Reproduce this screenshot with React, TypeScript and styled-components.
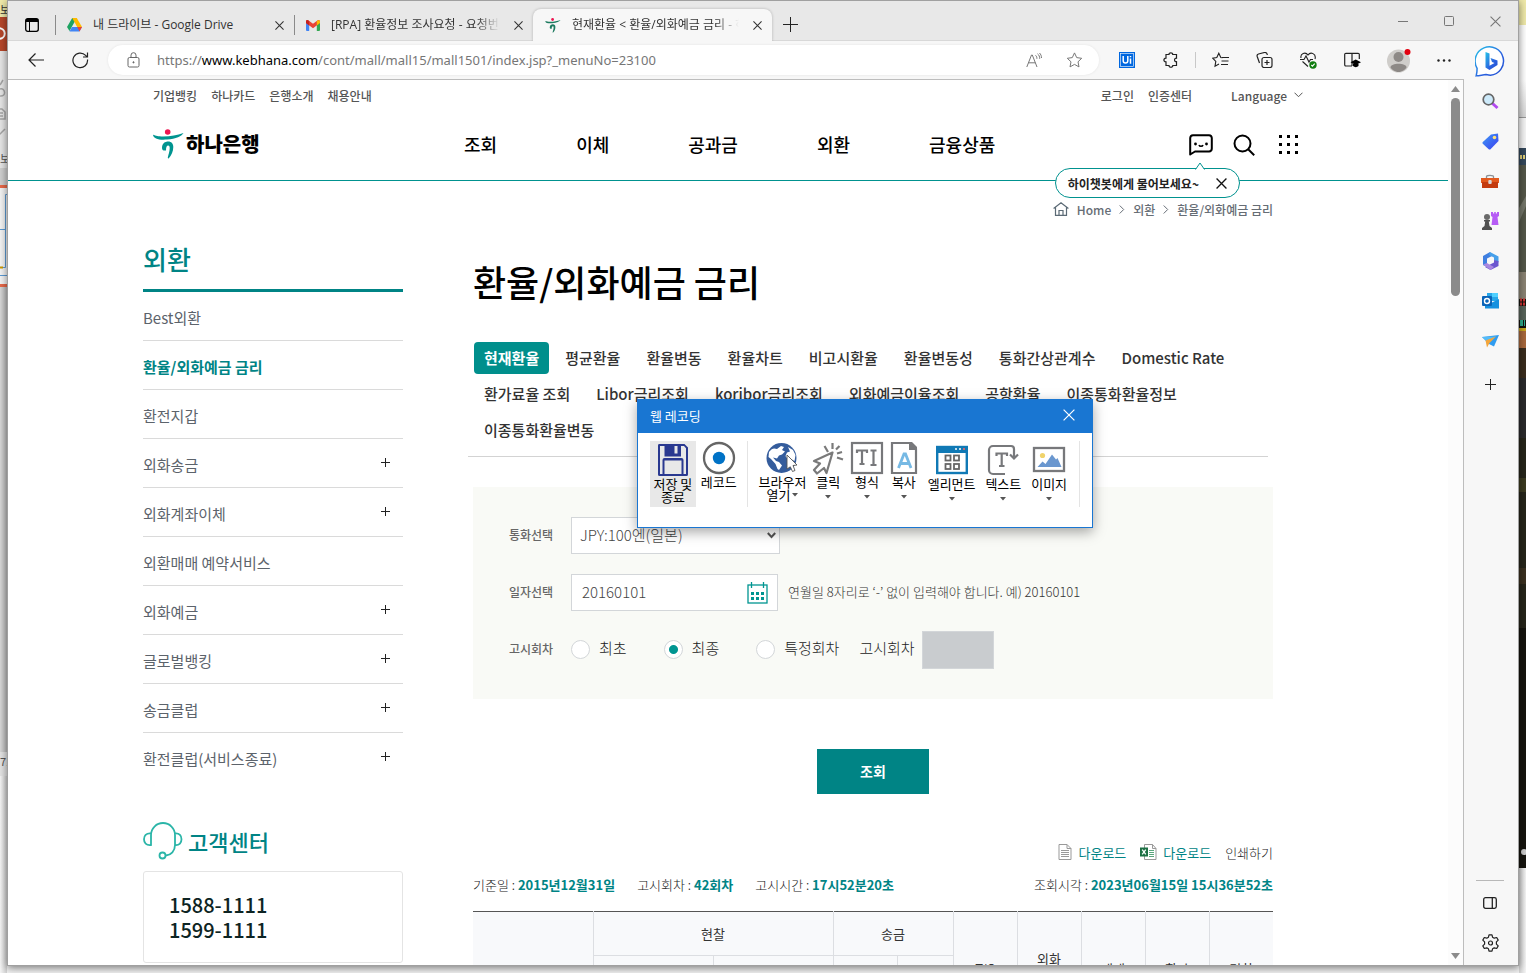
import React from "react";
import styled, { createGlobalStyle, css } from "styled-components";

const KR = `"Noto Sans CJK KR", sans-serif`;
const UI = `"Open Sans", "Noto Sans CJK KR", sans-serif`;
const TEAL = "#008485";

const GlobalStyle = createGlobalStyle`
  * { box-sizing: border-box; }
  body { margin: 0; background: #fff; font-family: ${KR}; font-size: 13px; color: #222; }
  button, input, select { font: inherit; color: inherit; margin: 0; }
  button { border: 0; background: none; padding: 0; cursor: pointer; }
  a { color: inherit; text-decoration: none; }
  ul { list-style: none; margin: 0; padding: 0; }
  h1, h2, p { margin: 0; }
  svg { display: block; flex: none; }
`;

/* ---------- desktop and browser frame ---------- */

const Desktop = styled.div`
  position: relative;
  display: grid;
  grid-template-columns: 7px minmax(0, 1fr) 7px;
  grid-template-rows: minmax(0, 1fr) 7px;
  height: 100vh;
  overflow: hidden;
  background: #f4f4f4;
`;

const EdgeStrip = styled.div<{ $col: number }>`
  grid-row: 1 / 3;
  grid-column: ${(p) => p.$col};
  display: flex;
  flex-direction: column;
  overflow: hidden;
`;

const EdgeBlock = styled.div<{ $h?: number; $bg: string; $color?: string }>`
  flex: ${(p) => (p.$h ? `none` : `1 0 0`)};
  height: ${(p) => (p.$h ? `${p.$h}px` : "auto")};
  background: ${(p) => p.$bg};
  color: ${(p) => p.$color ?? "#555"};
  overflow: hidden;
  font-size: 11px;
  line-height: 18px;
  white-space: nowrap;
`;

const BrowserWindow = styled.div`
  grid-row: 1;
  grid-column: 2;
  display: flex;
  flex-direction: column;
  min-width: 0;
  min-height: 0;
  border: 1px solid #a0a0a0;
  background: #f7f7f7;
  box-shadow: 0 2px 8px rgba(0, 0, 0, 0.5);
  z-index: 1;
`;

const TabStrip = styled.div`
  display: flex;
  flex: none;
  height: 40px;
  background: #e8e8e8;
  border-bottom: 1px solid #d8d8d8;
  font-family: ${UI};
  font-size: 12px;
  color: #333;
`;

const TabMenuButton = styled.button`
  width: 47px;
  display: grid;
  place-items: center;
  padding-top: 8px;
`;

const BrowserTab = styled.div<{ $active?: boolean }>`
  display: flex;
  align-items: center;
  width: 239px;
  margin-top: 8px;
  height: 32px;
  padding: 0 8px 0 12px;
  gap: 11px;
  position: relative;
  ${(p) =>
    p.$active
      ? css`
          background: #f7f7f7;
          border-radius: 8px 8px 0 0;
          box-shadow: 0 0 3px rgba(0, 0, 0, 0.25);
          clip-path: inset(-4px -4px 0 -4px);
        `
      : css`
          &::before {
            content: "";
            position: absolute;
            left: 0;
            top: 6px;
            height: 20px;
            width: 1px;
            background: #8a8a8a;
          }
        `}
`;

const TabTitle = styled.span<{ $fade?: boolean }>`
  flex: 1;
  min-width: 0;
  overflow: hidden;
  white-space: nowrap;
  line-height: 20px;
  ${(p) => p.$fade && css`mask-image: linear-gradient(90deg, #000 86%, transparent);`}
`;

const SmallButton = styled.button<{ $w?: number }>`
  width: ${(p) => p.$w ?? 14}px;
  display: grid;
  place-items: center;
  flex: none;
`;

const NewTabButton = styled(SmallButton)`
  padding-top: 8px;
`;

const WindowButtons = styled.div`
  display: flex;
  margin-left: auto;
  padding-top: 2px;
`;

const BrowserBody = styled.div`
  flex: 1;
  display: flex;
  min-height: 0;
`;

const BrowserMain = styled.div`
  flex: 1;
  min-width: 0;
  display: flex;
  flex-direction: column;
`;

const Toolbar = styled.div`
  display: flex;
  align-items: center;
  flex: none;
  height: 38px;
  padding-left: 6px;
`;

const ToolButton = styled.button<{ $w?: number }>`
  width: ${(p) => p.$w ?? 44}px;
  height: 36px;
  display: grid;
  place-items: center;
  flex: none;
`;

const ToolDivider = styled.span`
  width: 1px;
  height: 16px;
  margin: 0 2px;
  background: #c8c8c8;
`;

const AddressBar = styled.form`
  flex: 1;
  min-width: 0;
  display: flex;
  align-items: center;
  height: 30px;
  margin: 0 6px;
  padding-left: 19px;
  padding-right: 5px;
  border-radius: 15px;
  background: #fff;
  box-shadow: 0 0 3px rgba(0, 0, 0, 0.08);
`;

const Url = styled.a`
  flex: 1;
  min-width: 0;
  margin-left: 17px;
  overflow: hidden;
  white-space: nowrap;
  font-family: "Noto Sans", sans-serif;
  font-size: 13px;
  color: #767676;
  b { font-weight: 400; color: #000; }
`;

const EdgeSidebar = styled.aside`
  width: 54px;
  flex: none;
  display: flex;
  flex-direction: column;
  align-items: center;
  padding: 0 2px 2px 0;
`;

const SideButton = styled.button<{ $gap?: boolean }>`
  width: 40px;
  height: 40px;
  flex: none;
  display: grid;
  place-items: center;
  margin-top: ${(p) => (p.$gap ? 3 : 0)}px;
`;

const SideRule = styled.span`
  width: 28px;
  height: 1px;
  margin-top: auto;
  margin-bottom: 2px;
  background: #b8b8b8;
`;

const Viewport = styled.div`
  flex: 1;
  display: flex;
  min-height: 0;
  overflow: hidden;
  background: #fff;
  border-top: 1px solid #bdbdbd;
  border-right: 1px solid #bdbdbd;
`;

const Page = styled.div`
  flex: 1;
  min-width: 0;
  overflow: hidden;
`;

const ScrollTrack = styled.div`
  width: 15px;
  flex: none;
  display: flex;
  flex-direction: column;
  align-items: center;
  justify-content: space-between;
  padding: 6px 0;
  background: #fcfcfc;
`;

const ScrollThumb = styled.div`
  width: 9px;
  height: 198px;
  margin-top: 6px;
  margin-bottom: auto;
  border-radius: 5px;
  background: #8b8b8b;
`;

/* ---------- bank site ---------- */

const SiteHeader = styled.header`
  height: 101px;
  border-bottom: 1px solid #00928f;
`;

const HeaderInner = styled.div`
  max-width: 1150px;
  margin: 0 auto;
`;

const UtilityRow = styled.div`
  display: flex;
  align-items: center;
  height: 30px;
  gap: 14px;
  font-size: 12px;
  font-weight: 500;
  color: #555;
`;

const LoginLink = styled.a`
  margin-left: auto;
`;

const LanguageButton = styled.button`
  display: flex;
  align-items: center;
  gap: 7px;
  margin-left: 25px;
`;

const NavRow = styled.div`
  display: flex;
  align-items: center;
  height: 68px;
`;

const Logo = styled.a`
  display: flex;
  align-items: center;
  gap: 2px;
  width: 311px;
  font-size: 20px;
  font-weight: 900;
  line-height: 30px;
  color: #000;
`;

const MainNav = styled.nav`
  display: flex;
  gap: 79px;
  font-size: 18px;
  font-weight: 500;
  color: #000;
`;

const HeaderTools = styled.div`
  display: flex;
  align-items: center;
  gap: 20px;
  margin-left: auto;
  padding-top: 2px;
  position: relative;
`;

const ChatBubble = styled.div`
  position: absolute;
  top: 36px;
  right: 63px;
  z-index: 2;
  display: flex;
  align-items: center;
  gap: 17px;
  height: 30px;
  padding: 0 12px;
  border: 1px solid #00928f;
  border-radius: 15px;
  background: #fff;
  font-size: 12px;
  font-weight: 700;
  white-space: nowrap;
  color: #222;
`;

const BubbleTail = styled.svg`
  position: absolute;
  top: -7px;
  right: 34px;
`;

const MainArea = styled.main`
  display: flex;
  max-width: 1170px;
  margin: 0 auto;
`;

const SideNav = styled.aside`
  width: 260px;
  flex: none;
  margin-right: 70px;
  padding-top: 53px;
`;

const SideTitle = styled.h2`
  padding-bottom: 5px;
  border-bottom: 3px solid ${TEAL};
  font-size: 26px;
  line-height: 50px;
  font-weight: 500;
  color: ${TEAL};
`;

const SideItem = styled.li<{ $current?: boolean }>`
  display: flex;
  align-items: center;
  justify-content: space-between;
  height: 49px;
  padding-right: 13px;
  padding-top: 2px;
  border-bottom: 1px solid #dadada;
  font-size: 15px;
  color: #5c636b;
  &:last-child { border-bottom-color: transparent; }
  svg { margin-bottom: 4px; }
  ${(p) => p.$current && css`color: ${TEAL}; font-weight: 700;`}
`;

const SupportTitle = styled.h2`
  display: flex;
  align-items: center;
  gap: 5px;
  height: 38px;
  margin-top: 40px;
  font-size: 22px;
  font-weight: 500;
  color: ${TEAL};
`;

const SupportBox = styled.div`
  height: 92px;
  margin-top: 11px;
  padding: 20px 25px;
  border: 1px solid #e4e4e4;
  border-radius: 3px;
  font-size: 20px;
  line-height: 25px;
  font-weight: 500;
  color: #0d2423;
`;

const Content = styled.section`
  flex: 1;
  min-width: 0;
  max-width: 800px;
  padding-top: 18px;
`;

const Breadcrumb = styled.nav`
  display: flex;
  align-items: center;
  justify-content: flex-end;
  gap: 8px;
  height: 20px;
  font-size: 12px;
  font-weight: 500;
  color: #666d75;
`;

const PageTitle = styled.h1`
  margin-top: 37px;
  font-size: 36px;
  line-height: 50px;
  font-weight: 500;
  color: #000;
`;

const RateTabs = styled.ul`
  display: flex;
  flex-wrap: wrap;
  gap: 4px 6px;
  margin: 36px 5px 0 -5px;
  padding: 0 0 10px 6px;
  border-bottom: 1px solid #d3d3d3;
`;

const RateTab = styled.a<{ $active?: boolean }>`
  display: block;
  padding: 0 10px;
  border-radius: 4px;
  font-size: 15px;
  line-height: 32px;
  font-weight: 500;
  color: #333;
  ${(p) => p.$active && css`background: #008f8c; color: #fff; font-weight: 700;`}
`;

const SearchForm = styled.form`
  display: flex;
  flex-direction: column;
  gap: 20px;
  margin-top: 30px;
  padding: 30px 36px 31px;
  background: #f9faf6;
`;

const FormRow = styled.div`
  display: flex;
  align-items: center;
  height: 37px;
`;

const RowLabel = styled.label`
  width: 62px;
  flex: none;
  padding-bottom: 2px;
  font-size: 12px;
  font-weight: 500;
  color: #666;
`;

const CurrencySelect = styled.div`
  position: relative;
  width: 209px;
  height: 37px;
  select {
    appearance: none;
    width: 100%;
    height: 100%;
    padding: 0 8px 2px;
    border: 1px solid #d3d6d9;
    border-radius: 0;
    background: #fff;
    font-size: 15px;
    font-weight: 300;
    color: #444;
  }
  svg { position: absolute; right: 4px; top: 15px; pointer-events: none; }
`;

const DateField = styled.div`
  display: flex;
  align-items: center;
  width: 207px;
  height: 37px;
  padding: 0 9px 0 10px;
  border: 1px solid #d3d6d9;
  background: #fff;
  input {
    flex: 1;
    min-width: 0;
    border: 0;
    padding: 0 0 2px;
    outline: 0;
    font-size: 15px;
    font-weight: 300;
    color: #444;
  }
`;

const HelpText = styled.span`
  margin-left: 10px;
  padding-bottom: 2px;
  font-weight: 300;
  color: #333;
`;

const RadioLabel = styled.label`
  display: flex;
  align-items: center;
  gap: 9px;
  margin-right: 37px;
  font-size: 15px;
  font-weight: 300;
  color: #222;
  input {
    appearance: none;
    width: 19px;
    height: 19px;
    border: 1px solid #d3d6d9;
    border-radius: 50%;
    background: #fff;
  }
  input:checked { background: radial-gradient(circle, #009591 4px, #fff 5px); }
  span { padding-bottom: 4px; }
  &:last-of-type { margin-right: 20px; }
`;

const RoundLabel = styled.span`
  display: flex;
  align-items: center;
  gap: 7px;
  font-size: 15px;
  font-weight: 300;
  color: #222;
  label { padding-bottom: 4px; }
  input {
    width: 72px;
    height: 38px;
    border: 1px solid #d3d6d9;
    background: #c9cccf;
  }
`;

const SubmitButton = styled.button`
  display: block;
  width: 112px;
  height: 45px;
  margin: 50px auto 0;
  padding-bottom: 2px;
  background: ${TEAL};
  color: #fff;
  font-size: 14px;
  font-weight: 700;
`;

const DownloadRow = styled.div`
  display: flex;
  justify-content: flex-end;
  align-items: center;
  gap: 14px;
  height: 20px;
  margin-top: 48px;
  font-weight: 300;
  color: #222;
`;

const DownloadLink = styled.a`
  display: flex;
  align-items: center;
  gap: 6px;
  font-weight: 400;
  color: ${TEAL};
`;

const InfoRow = styled.div`
  display: flex;
  gap: 22px;
  height: 20px;
  line-height: 20px;
  margin-top: 13px;
  font-weight: 300;
  color: #222;
  white-space: nowrap;
  b { color: ${TEAL}; font-weight: 700; }
  span:last-child { margin-left: auto; }
`;

const RateTable = styled.table`
  width: 100%;
  margin-top: 16px;
  border-collapse: collapse;
  table-layout: fixed;
  border-top: 1px solid #555;
  th {
    padding: 0;
    border-left: 1px solid #dcdee2;
    border-bottom: 1px solid #dcdee2;
    background: #f8f9fb;
    font-weight: 400;
    line-height: 20px;
    color: #333;
  }
  th:first-child { border-left: 0; }
  tr + tr th:first-child { border-left: 1px solid #dcdee2; }
  tr:first-child { height: 44px; }
  tr:nth-child(2) { height: 90px; }
`;

/* ---------- recorder dialog ---------- */

const RecorderDialog = styled.div`
  position: absolute;
  left: 637px;
  top: 399px;
  width: 456px;
  height: 129px;
  z-index: 5;
  border: 1px solid #1976d2;
  background: #fff;
  box-shadow: 0 4px 12px rgba(0, 0, 0, 0.35);
  color: #000;
`;

const DialogTitle = styled.div`
  display: flex;
  align-items: center;
  justify-content: space-between;
  height: 33px;
  padding: 0 17px 3px 12px;
  background: #1976d2;
  color: #fff;
`;

const DialogTools = styled.div`
  display: flex;
  align-items: flex-start;
  padding: 8px 12px;
`;

const DialogButton = styled.button<{ $w: number; $active?: boolean; $low?: boolean }>`
  width: ${(p) => p.$w}px;
  height: 66px;
  padding-top: ${(p) => (p.$low ? 2 : 0)}px;
  display: flex;
  flex-direction: column;
  align-items: center;
  background: ${(p) => (p.$active ? "#e8e8e8" : "transparent")};
  line-height: 13px;
  white-space: nowrap;
`;

const DialogRule = styled.span<{ $l: number; $r: number }>`
  width: 1px;
  height: 66px;
  margin-left: ${(p) => p.$l}px;
  margin-right: ${(p) => p.$r}px;
  background: #e4e4e4;
`;

const LabelLine = styled.span`
  display: flex;
  align-items: center;
  gap: 2px;
`;

const CaretSlot = styled.span`
  padding-top: 7px;
`;

/* ---------- drawings ---------- */

const Cross = ({ s = 9, c = "#333", w = 1.2 }: { s?: number; c?: string; w?: number }) => (
  <svg width={s} height={s} viewBox="0 0 10 10" stroke={c} strokeWidth={w} fill="none">
    <path d="M.5.5l9 9M9.5.5l-9 9" />
  </svg>
);

const Plus = ({ s = 9, c = "#222" }: { s?: number; c?: string }) => (
  <svg width={s} height={s} viewBox={`0 0 ${s} ${s}`} stroke={c} fill="none">
    <path d={`M${s / 2} 0v${s}M0 ${s / 2}h${s}`} />
  </svg>
);

const Caret = () => (
  <svg width="6" height="4" viewBox="0 0 6 4"><path d="M0 0h6L3 3.5z" fill="#555" /></svg>
);

const HanaMark = ({ w = 31, h = 30, dark }: { w?: number; h?: number; dark?: boolean }) => {
  const c = dark ? "#1d7a5f" : "#009490";
  return (
    <svg width={w} height={h} viewBox="0 0 31 30">
      <circle cx="14.700" cy="3" r="2.800" fill="#ed1651" />
      <path d="M0 5.800c3 .9 5 1.700 10 1.700 8 0 14-1.200 20.500-3.500C29 7 23 10 14 10.600 6 11.200.5 10 0 5.800z" fill={c} />
      <path d="M9 19c0-4.500 3-6.500 6.300-6.500 3 0 5 2.200 5 5.500 0 4.500-2 8.500-4.500 11.200-.5.500-1.200.2-1-.6.600-3 1.900-6 1.900-9.500 0-1.500-.5-2.500-1.500-2.500-1.500 0-2.200 1.500-2.200 4.800C10.500 22 9 21 9 19z" fill={c} />
    </svg>
  );
};

const TabsIcon = () => (
  <svg width="14" height="14" viewBox="0 0 14 14" fill="none" stroke="#000">
    <rect x=".7" y=".7" width="12.600" height="12.600" rx="2" strokeWidth="1.300" />
    <path d="M1 2.500h12" strokeWidth="3" /><path d="M4.500 3v10" />
  </svg>
);

const DriveIcon = () => (
  <svg width="15" height="14" viewBox="0 0 15 14">
    <path d="M5.200 0h4.600L5 8.500 2.500 13 0 9z" fill="#1ea362" />
    <path d="M5.200 0h4.600L15 9h-4.800z" fill="#ffba00" />
    <path d="M2.500 13.500L5 9h10l-2.500 4.500z" fill="#4285f4" />
    <path d="M10.200 9H15l-2.500 4.500z" fill="#ea4335" />
  </svg>
);

const GmailIcon = () => (
  <svg width="14" height="11" viewBox="0 0 14 11">
    <path d="M0 1.500V10a1 1 0 001 1h2.200V4.500z" fill="#4285f4" />
    <path d="M14 1.500V10a1 1 0 01-1 1h-2.200V4.500z" fill="#34a853" />
    <path d="M0 1.500C0 0 1.500-.4 2.600.5L7 3.800 11.400.5C12.500-.4 14 0 14 1.500V3L7 8.200 0 3z" fill="#ea4335" />
    <path d="M10.800.9C12-.3 14 0 14 1.500V3l-3.200 2.400z" fill="#fbbc04" />
    <path d="M0 1.500C0 .6.500 0 1.300 0L3.200 1v4.400L0 3z" fill="#c5221f" />
  </svg>
);

const BackIcon = () => (
  <svg width="16" height="14" viewBox="0 0 16 14" fill="none" stroke="#222" strokeWidth="1.200"><path d="M7.500.5L1 7l6.500 6.500M1 7h15" /></svg>
);

const ReloadIcon = () => (
  <svg width="17" height="17" viewBox="0 0 17 17" fill="none" stroke="#222" strokeWidth="1.200"><path d="M15.500 7.500A7.300 7.300 0 1113.600 3.400L15.500 5M15.500.5V5H11" /></svg>
);

const LockIcon = () => (
  <svg width="13" height="16" viewBox="0 0 13 16" fill="none" stroke="#666"><rect x="1" y="5.500" width="11" height="9.500" rx="1.500" /><path d="M4 5.500V3.200a2.500 2.500 0 015 0v2.300" /><circle cx="6.500" cy="10.300" r=".6" fill="#666" /></svg>
);

const ReadAloudIcon = () => (
  <svg width="16" height="15" viewBox="0 0 16 15" fill="none" stroke="#777"><path d="M.8 14L5.500 2h.8L11 14M2.400 9.800h7M9.500 2.300c1 .8 1.500 2 1.400 3.500M11.500.8c1.500 1.200 2.300 2.800 2.200 5M13.500 0c1.400 1.400 2 3 2 5" /></svg>
);

const STAR = "M8 .9l2.200 4.700 5 .7-3.700 3.500 1 5.100L8 12.400l-4.500 2.500 1-5.100L.8 6.300l5-.7z";

const StarIcon = () => (
  <svg width="17" height="16" viewBox="0 0 16 16" fill="none" stroke="#777"><path d={STAR} /></svg>
);

const UiIcon = () => (
  <svg width="16" height="16" viewBox="0 0 16 16">
    <rect width="16" height="16" fill="#0067df" /><rect x="1.500" y="1.500" width="13" height="13" fill="none" stroke="#fff" strokeWidth=".6" />
    <path d="M4.200 4v4.700a2.300 2.300 0 004.600 0V4M11.500 6.500v5.300M11.500 4v1.300" stroke="#fff" strokeWidth="1.500" fill="none" />
  </svg>
);

const PuzzleIcon = () => (
  <svg width="16" height="16" viewBox="0 0 16 16" fill="none" stroke="#222" strokeWidth="1.200"><path d="M3 2.500h3c-.3-2.300 4-2.300 3.700 0h3.800v3.700c-2.600-.4-2.600 3.900 0 3.500v3.800H9.800c.2 2.300-4 2.300-3.800 0H3V9.800C.2 10 .2 6 3 6.200z" /></svg>
);

const FavoritesIcon = () => (
  <svg width="17" height="16" viewBox="0 0 17 16" fill="none" stroke="#222" strokeWidth="1.100"><path d="M10.500 5.700L8.800 5.500 6.800 1.200 4.800 5.500.7 6.200l3.100 3.200-.8 4.900 4-2.200M10 5.500h7M9.500 9h7M9 12.500h7" /></svg>
);

const CollectionsIcon = () => (
  <svg width="17" height="16" viewBox="0 0 17 16" fill="none" stroke="#222" strokeWidth="1.200"><rect x="6" y="5.500" width="10" height="10" rx="2" /><path d="M11 8v5M8.500 10.500h5M3.500 11L1.200 4.500A2 2 0 012.500 2l6-1.500c1.500-.3 2.500.6 2.900 2.500" /></svg>
);

const HeartIcon = () => (
  <svg width="17" height="17" viewBox="0 0 17 17" fill="none" stroke="#222" strokeWidth="1.100">
    <path d="M1 6C0 1.500 5.500-.5 8 3c2.500-3.500 8.500-1.500 7 4M2.500 9.500L8 14.500M0 7.500h4L6 4l3 6 1.500-2.500H13" />
    <circle cx="13" cy="13" r="3.700" fill="#107c10" stroke="none" /><path d="M11.300 13l1.200 1.200 2.200-2.500" stroke="#fff" />
  </svg>
);

const ReaderIcon = () => (
  <svg width="17" height="16" viewBox="0 0 17 16" fill="none" stroke="#222" strokeWidth="1.200"><path d="M8 14H2A1.200 1.200 0 01.7 12.800V2.500A1.200 1.200 0 012 1.300h12a1.200 1.200 0 011.300 1.200V7M8 1.300V14" /><path d="M6.500 10.300l5.200-2.800 5.300 2.800-5.300 2.800z" fill="#000" stroke="none" /><path d="M9 12v2c1.500 1.500 4 1.500 5.500 0v-2" fill="#000" stroke="none" /></svg>
);

const AvatarIcon = () => (
  <svg width="27" height="25" viewBox="0 0 27 25">
    <circle cx="12.500" cy="13" r="11.500" fill="#cfcdca" /><circle cx="12.500" cy="9" r="5" fill="#8d8986" />
    <path d="M4.500 19.500c0-5 16-5 16 0-1 2-4.500 4.500-8 4.500s-7-2.500-8-4.500z" fill="#8d8986" /><circle cx="21.500" cy="4" r="3" fill="#e3000f" />
  </svg>
);

const DotsIcon = () => (
  <svg width="14" height="3" viewBox="0 0 14 3" fill="#222"><circle cx="1.500" cy="1.500" r="1.200" /><circle cx="7" cy="1.500" r="1.200" /><circle cx="12.500" cy="1.500" r="1.200" /></svg>
);

const BingIcon = () => (
  <svg width="31" height="31" viewBox="0 0 31 31">
    <defs><linearGradient id="bing" x1="0" y1="0" x2="1" y2="1"><stop offset="0" stopColor="#27c4e8" /><stop offset=".6" stopColor="#2b62e0" /><stop offset="1" stopColor="#2250d0" /></linearGradient></defs>
    <path d="M1.200 29.800c.8-3 .9-4.500.9-7.500A14.200 14.200 0 1115.500 29.200c-1.500 0-3-.3-4.500-.6-3 .2-6 .9-9.800 1.200z" fill="#fff" stroke="url(#bing)" strokeWidth="1.500" />
    <path d="M10.500 6l4 1.500v12.300l5-2.700-2.500-1.200-1.500-4 7 2.700V19l-8 5-4-2.500z" fill="url(#bing)" />
  </svg>
);

const MagnifierIcon = () => (
  <svg width="17" height="17" viewBox="0 0 17 17"><path d="M10 10l5.500 5" stroke="#b14af0" strokeWidth="3" /><circle cx="6.500" cy="6.500" r="5.300" fill="#cdeafa" stroke="#666" strokeWidth="1.700" /></svg>
);

const TagIcon = () => (
  <svg width="17" height="17" viewBox="0 0 17 17">
    <defs><linearGradient id="tag" x1="0" y1="0" x2="1" y2="1"><stop stopColor="#3f9bf5" /><stop offset="1" stopColor="#3a3df0" /></linearGradient></defs>
    <path d="M9 1.500L16 .5l.5 7.500-8 8.200c-.6.500-1.200.5-1.800 0L.8 10.700c-.5-.5-.5-1.200 0-1.700z" fill="url(#tag)" /><circle cx="12.500" cy="4.500" r="1.800" fill="#ffe27a" />
  </svg>
);

const ToolboxIcon = () => (
  <svg width="18" height="15" viewBox="0 0 18 15"><path d="M5.500 4V2.500C5.500 1 12.500 1 12.500 2.500V4" fill="none" stroke="#8b9196" strokeWidth="1.300" /><path d="M0 4h18v5H0z" fill="#e2591e" /><path d="M1 8h16v6H1z" fill="#c33c10" /><rect x="7.300" y="6" width="3.400" height="4" rx="1" fill="#d9d9d9" /></svg>
);

const GamesIcon = () => (
  <svg width="18" height="18" viewBox="0 0 18 18">
    <path d="M10 0h2v1.500h1.200V0h1.600v1.500H16V0h2v4l-1.500 1L17.500 13h-7L11.500 5 10 4z" fill="#b65cf5" />
    <circle cx="6" cy="5" r="3" fill="#6a6a6a" /><path d="M3 8h6v1.500H7.800l.7 4.500 2.500 2v2H1v-2l2.500-2 .7-4.500H3z" fill="#505050" />
  </svg>
);

const M365Icon = () => (
  <svg width="17" height="18" viewBox="0 0 17 18">
    <path d="M8 0L1 4v9l4 2V6.500L10 4z" fill="#3f7fe0" /><path d="M8 0l8.500 4.500v6L12 8V5.500L7 3z" fill="#46a0ea" />
    <path d="M16.500 9v5l-8 4L3 15l5-2.500 4-2V8z" fill="#6a55cf" /><path d="M1 12.500L8.500 18 12 15l-5-2.800L5 11z" fill="#a987e0" />
  </svg>
);

const OutlookIcon = () => (
  <svg width="17" height="16" viewBox="0 0 17 16"><path d="M5 0h11v8H5z" fill="#28a8ea" /><path d="M10 0h6v4h-6z" fill="#50d0ff" /><path d="M3 15.500V7l6 3 8-4v9.500z" fill="#1490df" /><rect y="3" width="10" height="10" rx="1" fill="#0a64b8" /><circle cx="5" cy="8" r="2.500" fill="none" stroke="#fff" strokeWidth="1.400" /></svg>
);

const PlaneIcon = () => (
  <svg width="17" height="13" viewBox="0 0 17 13"><path d="M0 2L17 0 12 11.500 7 9z" fill="#2f9cf0" /><path d="M0 2l14-.5L6 7.500z" fill="#54bcf8" /><path d="M3.500 5.500L14 1.500 7.500 8 5 12.500z" fill="#f3a53a" /></svg>
);

const PanelIcon = () => (
  <svg width="14" height="12" viewBox="0 0 14 12" fill="none" stroke="#222" strokeWidth="1.300"><rect x=".7" y=".7" width="12.600" height="10.600" rx="1.800" /><path d="M9.300.7v10.600" /></svg>
);

const GearIcon = () => (
  <svg width="17" height="18" viewBox="0 0 17 18" fill="none" stroke="#222" strokeWidth="1.200"><path d="M7 .8h3l.6 2.500 1.600.9 2.500-.7 1.500 2.600-1.800 1.800v2.200l1.800 1.800-1.500 2.600-2.500-.7-1.600.9-.6 2.500H7l-.6-2.500-1.600-.9-2.500.7L.8 11.900l1.800-1.800V7.900L.8 6.100l1.500-2.600 2.500.7 1.600-.9z" strokeLinejoin="round" /><circle cx="8.500" cy="9" r="2" /></svg>
);

const ChatIcon = () => (
  <svg width="24" height="22" viewBox="0 0 24 22"><path d="M1.200 20.500V4A3 3 0 014 1.200h16A3 3 0 0122.800 4v10.500a3 3 0 01-2.800 3H6z" fill="none" stroke="#000" strokeWidth="2" strokeLinejoin="round" /><circle cx="6.500" cy="10" r="1.400" /><circle cx="17.500" cy="10" r="1.400" /><path d="M10 11c.5 1.800 3.500 1.800 4 0" fill="none" stroke="#000" strokeWidth="1.500" /></svg>
);

const SearchIcon = () => (
  <svg width="22" height="22" viewBox="0 0 22 22" fill="none" stroke="#000" strokeWidth="2"><circle cx="9.500" cy="9.500" r="8" /><path d="M15.200 15.200l6 6" /></svg>
);

const GridIcon = () => (
  <svg width="20" height="20" viewBox="0 0 20 20">
    {[0, 8, 16].map((y) => [0, 8, 16].map((x) => <rect key={`${x}-${y}`} x={x} y={y} width="3" height="3" />))}
  </svg>
);

const Chevron = ({ down }: { down?: boolean }) =>
  down ? (
    <svg width="9" height="6" viewBox="0 0 9 6" fill="none" stroke="#555"><path d="M.5.7l4 4 4-4" /></svg>
  ) : (
    <svg width="6" height="9" viewBox="0 0 6 9" fill="none" stroke="#666d75"><path d="M.7.500l4 4-4 4" /></svg>
  );

const HomeIcon = () => (
  <svg width="16" height="14" viewBox="0 0 16 14" fill="none" stroke="#5b6a75" strokeWidth="1.200"><path d="M.6 6.500L8 .8l7.400 5.700M2.500 5.500v7.900h11V5.500M6 13.400V8.500h4v4.900" /></svg>
);

const HeadsetIcon = () => (
  <svg width="40" height="38" viewBox="0 0 40 38" fill="none" stroke="#2bb5a8" strokeWidth="1.800"><path d="M8 23V13a12 12 0 0124 0v10c0 6-4 10-9 10.500M8 11.500C3 11 1 14 1 17.300S3 23.500 8 23zM32 11.500c4.500-.5 6.500 2.500 6.500 5.800S36.500 23.500 32 23z" /><circle cx="19.500" cy="33.500" r="3" /></svg>
);

const CalendarIcon = () => (
  <svg width="21" height="22" viewBox="0 0 21 22" fill="none" stroke="#009591"><rect x="1" y="3" width="19" height="18" strokeWidth="1.300" /><path d="M4.500 0v6M16.500 0v6" strokeWidth="1.300" />
    {[10, 15].map((y) => [4, 9, 14].map((x) => <rect key={`${x}-${y}`} x={x} y={y} width="3" height="3" fill="#009591" stroke="none" />))}
  </svg>
);

const DocIcon = () => (
  <svg width="14" height="16" viewBox="0 0 14 16" fill="#fff" stroke="#999"><path d="M1 .5h8l4 4v11H1zM9 .5v4h4M3 6.500h8M3 8.500h8M3 10.500h8M3 12.500h8" /></svg>
);

const ExcelIcon = () => (
  <svg width="17" height="16" viewBox="0 0 17 16"><path d="M4.500.5h8l3.500 4v11H4.500zM12.500.5v4H16" fill="#fff" stroke="#999" /><path d="M9 6.500h5M9 8.500h5M9 10.500h5M9 12.500h5" stroke="#5aa67c" /><path d="M0 3.500h8v9H0z" fill="#1d7044" /><path d="M2.200 5.700l3.600 4.600M5.800 5.700l-3.600 4.600" stroke="#fff" strokeWidth="1.300" /></svg>
);

const FloppyIcon = () => (
  <svg width="34" height="36" viewBox="0 0 34 36">
    <path d="M3 3h25.500L32 6.500v27a1.500 1.500 0 01-1.500 1.500h-27A1.500 1.500 0 012 33.500V4.500A1.500 1.500 0 013 3z" fill="#2a3990" />
    <path d="M4 5h4.500v10.500H25V5h3l2 2.200V33h-2.500V19a2 2 0 00-2-2h-17a2 2 0 00-2 2v14H4z" fill="#e8e8e8" />
    <path d="M10 3h14v11.500H10z" fill="#2a3990" /><path d="M18.500 5h3v7.500h-3z" fill="#e8e8e8" />
    <path d="M8.500 19.500h17V33h-17z" fill="#e8e8e8" />
  </svg>
);

const RecordIcon = () => (
  <svg width="34" height="34" viewBox="0 0 34 34"><circle cx="17" cy="17" r="15" fill="#fff" stroke="#666" strokeWidth="2.300" /><circle cx="17" cy="17" r="6.200" fill="#0072c6" /></svg>
);

const GlobeIcon = () => (
  <svg width="34" height="34" viewBox="0 0 34 34"><circle cx="16.500" cy="17" r="15" fill="#345c9c" /><path d="M4 11c3-4 5-4 8-3l4-3 3 1-2 3 3 1.500-3 3-3 1-2 3-4-1 3 3.500 3 1 3 3.500-3 4.500-1.500-1-2-5-4.500-5-2.500-2zM23 6l5 3 2.500 5-1 6-3.500-2-3 1-2.500-4 1.500-3.500 3-1z" fill="#fff" /><path d="M22 14l10 10-4 .5 2 5-2.500 1-2.200-4.700L22 28z" fill="#fff" stroke="#555" strokeWidth=".9" /></svg>
);

const ClickIcon = () => (
  <svg width="34" height="34" viewBox="0 0 34 34" fill="none" stroke="#7a7a7a" strokeWidth="2.200"><path d="M21.500 11.500L3 20l6 2.500L3 29l3 3.500 7-5.500 2.500 5z" strokeLinejoin="round" /><path d="M13.500 5l3.500 6M21.500 2v6M28.500 5l-3.500 3.500M31 11l-5 1.500M26 16.500l6 2" /></svg>
);

const TypeIcon = () => (
  <svg width="34" height="34" viewBox="0 0 34 34" fill="none" stroke="#77787b"><rect x="2" y="2" width="30" height="30" strokeWidth="2.200" /><path d="M7 12v-2.500h10V12M12 9.500V23M9.500 23h5M20.500 9.500h6M20.500 24h6M23.500 9.500V24" strokeWidth="2.200" /></svg>
);

const CopyIcon = () => (
  <svg width="28" height="34" viewBox="0 0 28 34" fill="none"><path d="M2 2h18l6 6v24H2z" stroke="#77787b" strokeWidth="2.200" /><path d="M19 1h3l5 5v3h-8z" fill="#77787b" /><path d="M8.500 27L14 13h1.500L21 27M10.500 22.500h8.500" stroke="#76b9e4" strokeWidth="2.800" /></svg>
);

const ElementIcon = () => (
  <svg width="32" height="34" viewBox="0 0 32 34" fill="none"><rect x="1.200" y="4" width="29.600" height="26" fill="#fff" stroke="#1079b5" strokeWidth="2.400" /><path d="M0 3h32v7H0z" fill="#1079b5" /><circle cx="20" cy="6" r="1" fill="#fff" /><circle cx="24" cy="6" r="1" fill="#fff" /><circle cx="28" cy="6" r="1" fill="#f66" /><g stroke="#666" strokeWidth="1.800"><rect x="9.500" y="12.500" width="5" height="5" /><rect x="18" y="12.500" width="5" height="5" /><rect x="9.500" y="21" width="5" height="5" /><rect x="18" y="21" width="5" height="5" /></g></svg>
);

const TextIcon = () => (
  <svg width="34" height="34" viewBox="0 0 34 34" fill="none" stroke="#77787b" strokeWidth="2.200"><path d="M19 31H7a4 4 0 01-4-4V7a4 4 0 014-4h18a3 3 0 013 3v9M24 11.500l4 4 4-4M10.500 13v-2.500H21V13M15.700 10.500V23M13 23h5.500" /></svg>
);

const PictureIcon = () => (
  <svg width="34" height="34" viewBox="0 0 34 34"><rect x="2" y="5" width="30" height="23" fill="#fff" stroke="#77787b" strokeWidth="2.300" /><circle cx="10.500" cy="12.500" r="2.600" fill="#f0d36b" /><path d="M5.500 24l5-5.500 3 2.500L20 11.500l4 5 1.500-1.500 4 9z" fill="#6a97cf" /></svg>
);

/* ---------- data ---------- */

const sideMenu: { label: string; plus?: boolean; current?: boolean }[] = [
  { label: "Best외환" },
  { label: "환율/외화예금 금리", current: true },
  { label: "환전지갑" },
  { label: "외화송금", plus: true },
  { label: "외화계좌이체", plus: true },
  { label: "외환매매 예약서비스" },
  { label: "외화예금", plus: true },
  { label: "글로벌뱅킹", plus: true },
  { label: "송금클럽", plus: true },
  { label: "환전클럽(서비스종료)", plus: true },
];

const rateTabs = [
  "현재환율", "평균환율", "환율변동", "환율차트", "비고시환율", "환율변동성", "통화간상관계수", "Domestic Rate",
  "환가료율 조회", "Libor금리조회", "koribor금리조회", "외화예금이율조회", "공항환율", "이종통화환율정보", "이종통화환율변동",
];

const recorderTools: { label: string; w: number; icon: React.ReactNode; low?: boolean }[] = [
  { label: "클릭", w: 42, icon: <ClickIcon /> },
  { label: "형식", w: 36, icon: <TypeIcon /> },
  { label: "복사", w: 38, icon: <CopyIcon /> },
  { label: "엘리먼트", w: 58, icon: <ElementIcon />, low: true },
  { label: "텍스트", w: 46, icon: <TextIcon />, low: true },
  { label: "이미지", w: 46, icon: <PictureIcon />, low: true },
];

const edgeApps: [string, React.ReactNode][] = [
  ["검색", <MagnifierIcon />],
  ["쇼핑", <TagIcon />],
  ["도구", <ToolboxIcon />],
  ["게임", <GamesIcon />],
  ["Microsoft 365", <M365Icon />],
  ["Outlook", <OutlookIcon />],
  ["드롭", <PlaneIcon />],
];

/* ---------- parts ---------- */

const LeftDesktop = () => (
  <EdgeStrip $col={1}>
    <EdgeBlock $h={17} $bg="#efe9a9" $color="#333">보</EdgeBlock>
    <EdgeBlock $h={34} $bg="#b7472a">
      <svg width="7" height="34"><path d="M-2 11c9 0 9 11 0 11" fill="none" stroke="#fff" strokeWidth="2" /></svg>
    </EdgeBlock>
    <EdgeBlock $h={98} $bg="#e6e6e6">
      <svg width="7" height="98" fill="none" stroke="#a5a5a5" strokeWidth="1.500">
        <path d="M0 34l3-5M0 38c5-2 7 8 0 7M-2 58h4l3 3v7h-7M0 62h3M0 65h3M-1 84l6-6" />
      </svg>
    </EdgeBlock>
    <EdgeBlock $h={19} $bg="#e6e6e6">보</EdgeBlock>
    <EdgeBlock $h={17} $bg="#cfcfcf" />
    <EdgeBlock $h={3} $bg="#e8694a" />
    <EdgeBlock $h={96} $bg="#f4f4f4">
      <svg width="7" height="96" fill="none" stroke="#5b9bd5"><path d="M7 6.500H5.500v73H0M0 41.500h5M0 87.500h7" /><path d="M0 79.500h3" stroke="#c90" strokeWidth="2" /></svg>
    </EdgeBlock>
    <EdgeBlock $h={3} $bg="#e8694a" />
    <EdgeBlock $h={465} $bg="linear-gradient(90deg,#d8d8d8,#bcbcbc)" />
    <EdgeBlock $h={24} $bg="#e4e4e4">71</EdgeBlock>
    <EdgeBlock $bg="linear-gradient(90deg,#f6f6f6,#d2d2d2)" />
  </EdgeStrip>
);

const RightDesktop = () => (
  <EdgeStrip $col={3}>
    <EdgeBlock $h={25} $bg="#efe9a9" />
    <EdgeBlock $h={92} $bg="linear-gradient(#fff,#fff 60%,#d8d8d8)" />
    <EdgeBlock $h={1} $bg="#999" />
    <EdgeBlock $h={30} $bg="#f6f6f6" />
    <EdgeBlock $h={720} $bg="#15140e">
      <svg width="7" height="720">
        <rect width="7" height="17" fill="#35495c" /><path d="M1 9h5" stroke="#e4d27a" strokeWidth="4" strokeDasharray="2 1" />
        <rect y="17" width="7" height="107" fill="#55584a" /><path d="M0 60l7-12v10l-7 16z" fill="#75776a" />
        <path d="M0 124h7v27H0z" fill="#8b8474" /><path d="M1 152h5M1 156h5" stroke="#c33" strokeWidth="3" strokeDasharray="2 1" />
        <path d="M0 158h7v14H0z" fill="#58645a" /><path d="M1 175h5" stroke="#2fb08f" strokeWidth="6" strokeDasharray="3 1" />
        <rect y="180" width="7" height="3" fill="#c8a71e" /><rect y="183" width="7" height="17" fill="#a9693d" />
        <rect y="200" width="7" height="30" fill="#3a2d1e" /><rect y="230" width="7" height="60" fill="#2a2a2c" />
        <rect y="290" width="7" height="190" fill="#26251a" /><rect y="330" width="7" height="14" fill="#3b3a20" />
        <rect y="420" width="7" height="16" fill="#3a3020" /><circle cx="5" cy="704" r="3" fill="#ccc" />
      </svg>
    </EdgeBlock>
    <EdgeBlock $bg="linear-gradient(90deg,#d4d4d4,#f6f6f6)" />
  </EdgeStrip>
);

const Recorder = () => (
  <RecorderDialog role="dialog" aria-label="웹 레코딩">
    <DialogTitle>
      <span>웹 레코딩</span>
      <button aria-label="닫기"><Cross s={12} c="#fff" w={1} /></button>
    </DialogTitle>
    <DialogTools>
      <DialogButton $w={46} $active><FloppyIcon /><span>저장 및</span><span>종료</span></DialogButton>
      <DialogButton $w={46}><RecordIcon /><span>레코드</span></DialogButton>
      <DialogRule $l={5} $r={10} />
      <DialogButton $w={50}><GlobeIcon /><span>브라우저</span><LabelLine>열기<Caret /></LabelLine></DialogButton>
      {recorderTools.map((t) => (
        <DialogButton key={t.label} $w={t.w} $low={t.low}>
          {t.icon}<span>{t.label}</span><CaretSlot><Caret /></CaretSlot>
        </DialogButton>
      ))}
      <DialogRule $l={7} $r={0} />
    </DialogTools>
  </RecorderDialog>
);

const BankHeader = () => (
  <SiteHeader>
    <HeaderInner>
      <UtilityRow>
        <a href="#corp">기업뱅킹</a><a href="#card">하나카드</a><a href="#about">은행소개</a><a href="#jobs">채용안내</a>
        <LoginLink href="#login">로그인</LoginLink><a href="#cert">인증센터</a>
        <LanguageButton>Language <Chevron down /></LanguageButton>
      </UtilityRow>
      <NavRow>
        <Logo href="#home"><HanaMark />하나은행</Logo>
        <MainNav>
          <a href="#inquiry">조회</a><a href="#transfer">이체</a><a href="#bills">공과금</a><a href="#fx">외환</a><a href="#products">금융상품</a>
        </MainNav>
        <HeaderTools>
          <button aria-label="챗봇"><ChatIcon /></button>
          <button aria-label="검색"><SearchIcon /></button>
          <SmallButton $w={28} aria-label="전체메뉴"><GridIcon /></SmallButton>
          <ChatBubble>
            <BubbleTail width="10" height="8" viewBox="0 0 10 8"><path d="M.5 7.500L5 1l4.500 6.500" fill="#fff" stroke="#00928f" /></BubbleTail>
            하이챗봇에게 물어보세요~
            <button aria-label="닫기"><Cross s={11} c="#111" /></button>
          </ChatBubble>
        </HeaderTools>
      </NavRow>
    </HeaderInner>
  </SiteHeader>
);

const RateSearch = () => (
  <SearchForm onSubmit={(e) => e.preventDefault()} id="rate-search">
    <FormRow>
      <RowLabel htmlFor="currency">통화선택</RowLabel>
      <CurrencySelect>
        <select id="currency"><option>JPY:100엔(일본)</option></select>
        <svg width="9" height="7" viewBox="0 0 9 7" fill="none" stroke="#555" strokeWidth="2"><path d="M.8 1l3.700 4 3.700-4" /></svg>
      </CurrencySelect>
    </FormRow>
    <FormRow>
      <RowLabel htmlFor="date">일자선택</RowLabel>
      <DateField><input id="date" defaultValue="20160101" /><button type="button" aria-label="달력"><CalendarIcon /></button></DateField>
      <HelpText>연월일 8자리로 ‘-’ 없이 입력해야 합니다. 예) 20160101</HelpText>
    </FormRow>
    <FormRow role="radiogroup" aria-label="고시회차">
      <RowLabel as="span">고시회차</RowLabel>
      <RadioLabel><input type="radio" name="round" /><span>최초</span></RadioLabel>
      <RadioLabel><input type="radio" name="round" defaultChecked /><span>최종</span></RadioLabel>
      <RadioLabel><input type="radio" name="round" /><span>특정회차</span></RadioLabel>
      <RoundLabel><label htmlFor="roundNo">고시회차</label><input id="roundNo" disabled /></RoundLabel>
    </FormRow>
  </SearchForm>
);

const Rates = () => (
  <RateTable>
    <colgroup>
      <col style={{ width: "15%" }} /><col style={{ width: "15%" }} /><col style={{ width: "15%" }} />
      <col style={{ width: "8%" }} /><col style={{ width: "7%" }} />
      <col /><col /><col /><col /><col />
    </colgroup>
    <thead>
      <tr>
        <th rowSpan={2}>통화</th>
        <th colSpan={2}>현찰</th>
        <th colSpan={2}>송금</th>
        <th rowSpan={2}>T/C<br />사실때</th>
        <th rowSpan={2}>외화<br />수표<br />파실때</th>
        <th rowSpan={2}>매매<br />기준율</th>
        <th rowSpan={2}>환가<br />료율</th>
        <th rowSpan={2}>미화<br />환산율</th>
      </tr>
      <tr><th>사실때</th><th>파실때</th><th>보낼때</th><th>받을때</th></tr>
    </thead>
  </RateTable>
);

export default function App() {
  return (
    <Desktop>
      <GlobalStyle />
      <LeftDesktop />
      <BrowserWindow>
        <TabStrip>
          <TabMenuButton aria-label="탭 작업"><TabsIcon /></TabMenuButton>
          <BrowserTab><DriveIcon /><TabTitle>내 드라이브 - Google Drive</TabTitle><SmallButton aria-label="탭 닫기"><Cross /></SmallButton></BrowserTab>
          <BrowserTab><GmailIcon /><TabTitle $fade>[RPA] 환율정보 조사요청 - 요청번호</TabTitle><SmallButton aria-label="탭 닫기"><Cross /></SmallButton></BrowserTab>
          <BrowserTab $active><HanaMark w={16} h={15} dark /><TabTitle $fade>현재환율 &lt; 환율/외화예금 금리 - 하나은행</TabTitle><SmallButton aria-label="탭 닫기"><Cross /></SmallButton></BrowserTab>
          <NewTabButton $w={36} aria-label="새 탭"><Plus s={15} /></NewTabButton>
          <WindowButtons>
            <SmallButton $w={46} aria-label="최소화"><svg width="10" height="1"><path d="M0 .5h10" stroke="#777" /></svg></SmallButton>
            <SmallButton $w={46} aria-label="최대화"><svg width="11" height="11"><rect x=".5" y=".5" width="9" height="9" rx="1" fill="none" stroke="#777" /></svg></SmallButton>
            <SmallButton $w={46} aria-label="닫기"><Cross s={11} c="#777" w={1} /></SmallButton>
          </WindowButtons>
        </TabStrip>
        <BrowserBody>
          <BrowserMain>
            <Toolbar>
              <ToolButton aria-label="뒤로"><BackIcon /></ToolButton>
              <ToolButton aria-label="새로 고침"><ReloadIcon /></ToolButton>
              <AddressBar onSubmit={(e) => e.preventDefault()}>
                <LockIcon />
                <Url href="#address">https://<b>www.kebhana.com</b>/cont/mall/mall15/mall1501/index.jsp?_menuNo=23100</Url>
                <ToolButton type="button" $w={40} aria-label="소리내어 읽기"><ReadAloudIcon /></ToolButton>
                <ToolButton type="button" $w={40} aria-label="즐겨찾기 추가"><StarIcon /></ToolButton>
              </AddressBar>
              <ToolButton aria-label="UiPath"><UiIcon /></ToolButton>
              <ToolButton aria-label="확장"><PuzzleIcon /></ToolButton>
              <ToolDivider />
              <ToolButton aria-label="즐겨찾기"><FavoritesIcon /></ToolButton>
              <ToolButton aria-label="컬렉션"><CollectionsIcon /></ToolButton>
              <ToolButton aria-label="브라우저 필수"><HeartIcon /></ToolButton>
              <ToolButton aria-label="몰입형 리더"><ReaderIcon /></ToolButton>
              <ToolButton $w={50} aria-label="프로필"><AvatarIcon /></ToolButton>
              <ToolButton $w={40} aria-label="설정 및 기타"><DotsIcon /></ToolButton>
            </Toolbar>
            <Viewport>
              <Page>
                <BankHeader />
                <MainArea>
                  <SideNav>
                    <SideTitle>외환</SideTitle>
                    <ul>
                      {sideMenu.map((m) => (
                        <SideItem key={m.label} $current={m.current}><a href="#menu">{m.label}</a>{m.plus && <Plus />}</SideItem>
                      ))}
                    </ul>
                    <SupportTitle><HeadsetIcon />고객센터</SupportTitle>
                    <SupportBox><p>1588-1111</p><p>1599-1111</p></SupportBox>
                  </SideNav>
                  <Content>
                    <Breadcrumb>
                      <HomeIcon /><a href="#home">Home</a><Chevron /><a href="#fx">외환</a><Chevron /><a href="#rates">환율/외화예금 금리</a>
                    </Breadcrumb>
                    <PageTitle>환율/외화예금 금리</PageTitle>
                    <RateTabs>
                      {rateTabs.map((t, i) => (
                        <li key={t}><RateTab href="#tab" $active={i === 0}>{t}</RateTab></li>
                      ))}
                    </RateTabs>
                    <RateSearch />
                    <SubmitButton form="rate-search">조회</SubmitButton>
                    <DownloadRow>
                      <DownloadLink href="#doc"><DocIcon />다운로드</DownloadLink>
                      <DownloadLink href="#xls"><ExcelIcon />다운로드</DownloadLink>
                      <a href="#print">인쇄하기</a>
                    </DownloadRow>
                    <InfoRow>
                      <span>기준일 : <b>2015년12월31일</b></span>
                      <span>고시회차 : <b>42회차</b></span>
                      <span>고시시간 : <b>17시52분20초</b></span>
                      <span>조회시각 : <b>2023년06월15일 15시36분52초</b></span>
                    </InfoRow>
                    <Rates />
                  </Content>
                </MainArea>
              </Page>
              <ScrollTrack>
                <svg width="9" height="6"><path d="M0 6h9L4.500 0z" fill="#8b8b8b" /></svg>
                <ScrollThumb />
                <svg width="9" height="6"><path d="M0 0h9L4.500 6z" fill="#8b8b8b" /></svg>
              </ScrollTrack>
            </Viewport>
          </BrowserMain>
          <EdgeSidebar>
            <SideButton aria-label="Bing"><BingIcon /></SideButton>
            {edgeApps.map(([name, icon]) => (
              <SideButton key={name} aria-label={name}>{icon}</SideButton>
            ))}
            <SideButton $gap aria-label="추가"><Plus s={11} /></SideButton>
            <SideRule />
            <SideButton aria-label="사이드바 숨기기"><PanelIcon /></SideButton>
            <SideButton aria-label="설정"><GearIcon /></SideButton>
          </EdgeSidebar>
        </BrowserBody>
      </BrowserWindow>
      <RightDesktop />
      <Recorder />
    </Desktop>
  );
}
